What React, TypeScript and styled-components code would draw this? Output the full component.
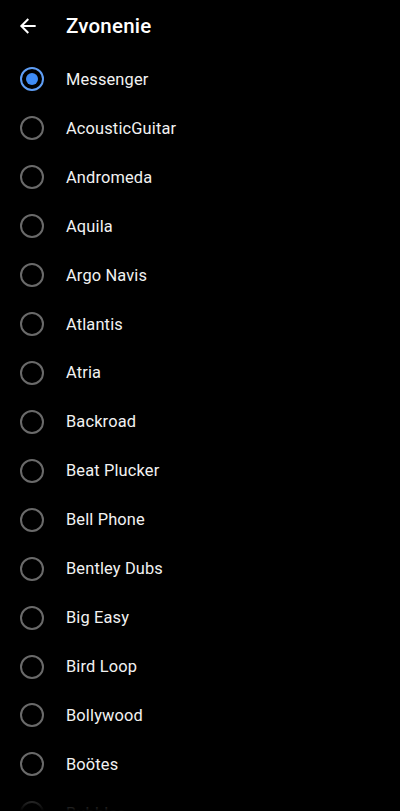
import React from "react";
import styled, { createGlobalStyle } from "styled-components";

const Global = createGlobalStyle`
  html, body { margin: 0; padding: 0; background: #000; }
  body { font-family: Roboto, "Noto Sans", sans-serif; -webkit-font-smoothing: antialiased; }
`;

const Screen = styled.div`
  position: relative;
  width: 400px;
  height: 811px;
  overflow: hidden;
  background: #000;
  color: #fff;
`;

const Header = styled.div`
  display: flex;
  align-items: center;
  height: 52px;
  padding-left: 18px;
  gap: 28px;
`;

const BackButton = styled.div`
  display: flex;
  align-items: center;
  justify-content: center;
  width: 20px;
  height: 20px;
`;

const Title = styled.h1`
  margin: 0;
  font-size: 20.5px;
  font-weight: 500;
  letter-spacing: 0.2px;
  color: #fff;
`;

const List = styled.div`
  display: flex;
  flex-direction: column;
  padding-top: 3px;
`;

const Row = styled.div`
  display: flex;
  align-items: center;
  height: 48.93px;
  padding-left: 20px;
  gap: 22px;
  flex-shrink: 0;
`;

const Radio = styled.div<{ $checked: boolean }>`
  box-sizing: border-box;
  width: 24px;
  height: 24px;
  border-radius: 50%;
  border: 2px solid ${(p) => (p.$checked ? "#5f9ef5" : "#6a6a6a")};
  display: flex;
  align-items: center;
  justify-content: center;
  &::after {
    content: "";
    display: ${(p) => (p.$checked ? "block" : "none")};
    width: 12px;
    height: 12px;
    border-radius: 50%;
    background: #3f8cf6;
  }
`;

const Label = styled.span`
  font-size: 16.4px;
  color: #f2f2f2;
  letter-spacing: 0.15px;
`;

const Fade = styled.div`
  position: absolute;
  left: 0;
  right: 0;
  bottom: 0;
  height: 16px;
  background: linear-gradient(to bottom, rgba(0, 0, 0, 0.4), #000);
`;

const items = [
  "Messenger",
  "AcousticGuitar",
  "Andromeda",
  "Aquila",
  "Argo Navis",
  "Atlantis",
  "Atria",
  "Backroad",
  "Beat Plucker",
  "Bell Phone",
  "Bentley Dubs",
  "Big Easy",
  "Bird Loop",
  "Bollywood",
  "Boötes",
  "Bubbles",
];

export default function App() {
  return (
    <>
      <Global />
      <Screen>
        <Header>
          <BackButton>
            <svg width="20" height="20" viewBox="0 0 24 24" fill="none">
              <path d="M20 12H4.5M11.5 4.5L4 12l7.5 7.5" stroke="#fff" strokeWidth="2.4" strokeLinecap="square" />
            </svg>
          </BackButton>
          <Title>Zvonenie</Title>
        </Header>
        <List>
          {items.map((name, i) => (
            <Row key={name}>
              <Radio $checked={i === 0} />
              <Label>{name}</Label>
            </Row>
          ))}
        </List>
        <Fade />
      </Screen>
    </>
  );
}
